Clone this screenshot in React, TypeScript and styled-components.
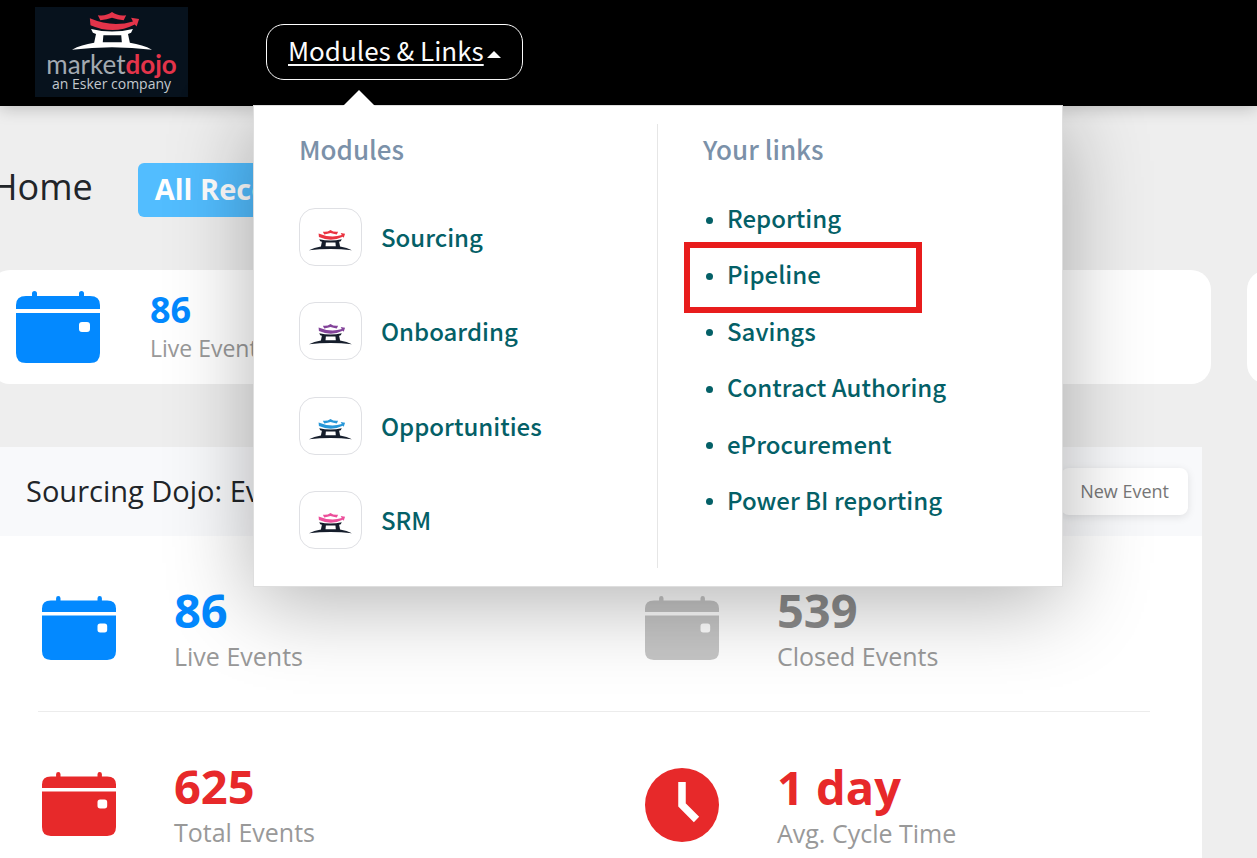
import React from "react";
import styled, { createGlobalStyle } from "styled-components";

const ui = `"Open Sans", "Noto Sans", sans-serif`;
const menu = `"Noto Sans CJK SC", "Noto Sans", sans-serif`;

const Global = createGlobalStyle`
  *, *::before, *::after { box-sizing: border-box; }
  body { margin: 0; background: #eeeeee; font-family: ${ui}; color: #212529; }
  ul { list-style: none; margin: 0; padding: 0; }
  h1, h2, h3, p { margin: 0; font-weight: 400; }
`;

const Page = styled.div`
  display: flex;
  flex-direction: column;
  min-height: 100vh;
  overflow: hidden;
`;

const Header = styled.header`
  position: relative;
  z-index: 2;
  display: flex;
  align-items: center;
  gap: 78px;
  padding: 7px 35px 9px;
  background: #000;
  box-shadow: 0 2px 16px rgba(0, 0, 0, 0.22);
`;

const Logo = styled.a`
  display: flex;
  flex-direction: column;
  align-items: center;
  width: 153px;
  height: 90px;
  padding-top: 5px;
  background: #07121d;
  color: #c3c8cd;
  text-decoration: none;
`;

const Brand = styled.span`
  font: 400 26px/26px Lato, sans-serif;
  color: #a3aab1;
  b { font-weight: 700; color: #e4344a; }
`;

const Tagline = styled.span`
  font: 400 14px/14px ${ui};
`;

const Nav = styled.nav`
  position: relative;
`;

const MenuButton = styled.button`
  display: flex;
  align-items: center;
  gap: 3px;
  height: 56px;
  padding: 0 21px 4px;
  border: 1px solid #fff;
  border-radius: 18px;
  background: #000;
  color: #fff;
  font: 400 26px/38px ${menu};
  span { text-decoration: underline; text-underline-offset: 3px; text-decoration-thickness: 2px; }
  svg { margin-top: 8px; }
`;

const Dropdown = styled.div`
  position: absolute;
  top: 81px;
  left: -13px;
  display: grid;
  grid-template-columns: 403px 1fr;
  width: 810px;
  padding: 18px 0;
  border: 1px solid #dedede;
  background: #fff;
  box-shadow: 0 16px 80px rgba(0, 0, 0, 0.3);
  font-family: ${menu};
  &::before {
    content: "";
    position: absolute;
    top: -16px;
    left: 89px;
    border: 16px solid transparent;
    border-top: 0;
    border-bottom-color: #fff;
  }
`;

const MenuColumn = styled.section`
  display: flex;
  flex-direction: column;
  height: 444px;
  padding: 7px 45px 18px;
  & + & { border-left: 1px solid #e6e6e6; }
`;

const MenuHeading = styled.h2`
  font-size: 26px;
  line-height: 36px;
  font-weight: 500;
  color: #7b91a9;
`;

const ModuleList = styled.ul`
  display: flex;
  flex: 1;
  flex-direction: column;
  justify-content: space-between;
  padding: 41px 0 1px;
`;

const ModuleLink = styled.a`
  display: flex;
  align-items: center;
  gap: 19px;
  color: #046067;
  font-size: 24px;
  font-weight: 500;
  line-height: 36px;
  text-decoration: none;
`;

const ModuleTile = styled.span`
  display: grid;
  place-items: center;
  width: 63px;
  height: 58px;
  padding-top: 7px;
  border: 1px solid #dfe0e4;
  border-radius: 16px;
`;

const LinkList = styled.ul`
  display: flex;
  flex: 1;
  flex-direction: column;
  justify-content: space-between;
  padding: 33px 0 32px;
`;

const LinkItem = styled.li`
  position: relative;
  display: flex;
  align-items: center;
  gap: 14px;
  padding-left: 3px;
  color: #046067;
  font-size: 24px;
  font-weight: 500;
  line-height: 36px;
  &::before {
    content: "";
    width: 7px;
    height: 7px;
    margin-top: 4px;
    border-radius: 50%;
    background: currentColor;
  }
  a { color: inherit; text-decoration: none; }
`;

const Highlight = styled.span`
  position: absolute;
  top: -14px;
  left: -19px;
  width: 238px;
  height: 71px;
  border: 6px solid #e81c1c;
  pointer-events: none;
`;

const Main = styled.main`
  display: flex;
  flex: 1;
  flex-direction: column;
`;

const TitleRow = styled.div`
  display: flex;
  align-items: center;
  gap: 45px;
  margin: 57px 0 53px -9px;
`;

const Title = styled.h1`
  padding-bottom: 6px;
  font-size: 36px;
  line-height: 48px;
`;

const FilterButton = styled.button`
  height: 54px;
  padding: 0 17px 2px;
  border: 0;
  border-radius: 6px;
  background: #52bdff;
  color: #fff;
  font: 700 29px/52px ${ui};
`;

const CardRow = styled.div`
  display: flex;
  gap: 36px;
  margin: 0 -1200px 63px -10px;
`;

const Card = styled.section`
  display: flex;
  flex: none;
  align-items: center;
  gap: 50px;
  width: calc(100vw - 36px);
  height: 114px;
  padding: 0 26px;
  border-radius: 20px;
  background: #fff;
`;

const CardText = styled.div`
  padding-top: 3px;
`;

const CardValue = styled.p`
  color: #0389ff;
  font-size: 36px;
  font-weight: 700;
  line-height: 38px;
`;

const CardLabel = styled.p`
  color: #999;
  font-size: 23px;
  line-height: 38px;
`;

const Panel = styled.section`
  display: flex;
  flex: 1;
  flex-direction: column;
  margin-right: 55px;
  background: #fff;
`;

const PanelHeader = styled.div`
  display: flex;
  align-items: center;
  justify-content: space-between;
  height: 89px;
  padding: 0 14px 0 26px;
  background: #f8f9fb;
`;

const PanelTitle = styled.h2`
  padding-bottom: 2px;
  font-size: 29px;
  line-height: 42px;
`;

const NewEventButton = styled.button`
  height: 47px;
  padding: 0 19px 2px;
  border: 0;
  border-radius: 8px;
  background: #fff;
  box-shadow: 0 2px 8px rgba(0, 0, 0, 0.1);
  color: #777;
  font: 400 18px/24px ${ui};
`;

const StatRow = styled.div`
  display: grid;
  grid-template-columns: 1fr 1fr;
  align-items: start;
  column-gap: 98px;
  margin: 0 52px 0 38px;
  padding: 56px 0 47px 4px;
  border-bottom: 1px solid #ececec;
  &:last-child { padding-bottom: 15px; border-bottom: 0; }
`;

const Stat = styled.div`
  display: flex;
  align-items: center;
  gap: 58px;
`;

const StatText = styled.div`
  display: grid;
  gap: 20px;
  white-space: nowrap;
`;

const StatValue = styled.p<{ $color: string }>`
  color: ${(p) => p.$color};
  font-size: 47px;
  font-weight: 700;
  line-height: 36px;
`;

const StatLabel = styled.p`
  color: #999;
  font-size: 25px;
  line-height: 16px;
`;

const Temple = ({ width, height, roof, base }: { width: number; height: number; roof: string; base: string }) => (
  <svg width={width} height={height} viewBox="0 0 130 62" preserveAspectRatio="none" aria-hidden="true">
    <path fill={roof} d="M42 5 Q55 7 65 0 Q75 7 88 5 L84 13 Q73 12 65 9 Q57 12 46 13Z" />
    <path fill={roof} d="M29 10 Q65 25 99 15 L96 9 L109 11 L105 23 L102 20 Q68 37 30 21Z" />
    <path
      fill={base}
      fillRule="evenodd"
      d="M31 27 Q65 35 99 27 L96 33 L91 35 L94 49 Q115 52 130 60 Q65 52 0 60 Q15 52 36 49 L39 35 L34 33Z M51 37 L50 48 H81 L80 37Z"
    />
  </svg>
);

const Calendar = ({ width, height, color }: { width: number; height: number; color: string }) => (
  <svg width={width} height={height} viewBox="0 0 84 72" preserveAspectRatio="none" aria-hidden="true" fill={color}>
    <path d="M0 18V14Q0 5 10 5H16V2.500Q16 0 18.500 0T21 2.500V5H63V2.500Q63 0 65.500 0T68 2.500V5H74Q84 5 84 14V18Z" />
    <path
      fillRule="evenodd"
      d="M0 22H84V62Q84 72 74 72H10Q0 72 0 62Z M66 31Q63 31 63 34V38Q63 41 66 41H71Q74 41 74 38V34Q74 31 71 31Z"
    />
  </svg>
);

const Clock = () => (
  <svg width="74" height="74" viewBox="0 0 74 74" aria-hidden="true">
    <circle cx="37" cy="37" r="37" fill="#e7292a" />
    <path d="M37 14V37L51.500 51.500" fill="none" stroke="#fff" strokeWidth="7.500" />
  </svg>
);

const modules = [
  { name: "Sourcing", color: "#ea3340" },
  { name: "Onboarding", color: "#83439a" },
  { name: "Opportunities", color: "#2797d8" },
  { name: "SRM", color: "#ec4f9b" },
];

const links = ["Reporting", "Pipeline", "Savings", "Contract Authoring", "eProcurement", "Power BI reporting"];

const stats = [
  [
    { value: "86", label: "Live Events", color: "#0389ff", icon: "#0389ff" },
    { value: "539", label: "Closed Events", color: "#8c8c8c", icon: "#c6c6c6" },
  ],
  [
    { value: "625", label: "Total Events", color: "#e7292a", icon: "#e7292a" },
    { value: "1 day", label: "Avg. Cycle Time", color: "#e7292a", icon: "clock" },
  ],
];

export default function App() {
  return (
    <Page>
      <Global />
      <Header>
        <Logo href="#">
          <Temple width={80} height={39} roof="#e4344a" base="#ffffff" />
          <Brand>market<b>dojo</b></Brand>
          <Tagline>an Esker company</Tagline>
        </Logo>
        <Nav>
          <MenuButton type="button" aria-expanded="true">
            <span>Modules &amp; Links</span>
            <svg width="14" height="7" viewBox="0 0 14 7" aria-hidden="true">
              <path d="M0 7L7 0L14 7Z" fill="#fff" />
            </svg>
          </MenuButton>
          <Dropdown>
            <MenuColumn>
              <MenuHeading>Modules</MenuHeading>
              <ModuleList>
                {modules.map((m) => (
                  <li key={m.name}>
                    <ModuleLink href="#">
                      <ModuleTile>
                        <Temple width={43} height={21} roof={m.color} base="#151d2b" />
                      </ModuleTile>
                      {m.name}
                    </ModuleLink>
                  </li>
                ))}
              </ModuleList>
            </MenuColumn>
            <MenuColumn>
              <MenuHeading>Your links</MenuHeading>
              <LinkList>
                {links.map((name) => (
                  <LinkItem key={name}>
                    <a href="#">{name}</a>
                    {name === "Pipeline" && <Highlight />}
                  </LinkItem>
                ))}
              </LinkList>
            </MenuColumn>
          </Dropdown>
        </Nav>
      </Header>
      <Main>
        <TitleRow>
          <Title>Home</Title>
          <FilterButton type="button">All Records</FilterButton>
        </TitleRow>
        <CardRow>
          <Card>
            <Calendar width={84} height={72} color="#0389ff" />
            <CardText>
              <CardValue>86</CardValue>
              <CardLabel>Live Events</CardLabel>
            </CardText>
          </Card>
          <Card />
        </CardRow>
        <Panel>
          <PanelHeader>
            <PanelTitle>Sourcing Dojo: Events</PanelTitle>
            <NewEventButton type="button">New Event</NewEventButton>
          </PanelHeader>
          {stats.map((row, i) => (
            <StatRow key={i}>
              {row.map((s) => (
                <Stat key={s.label}>
                  {s.icon === "clock" ? <Clock /> : <Calendar width={74} height={64} color={s.icon} />}
                  <StatText>
                    <StatValue $color={s.color}>{s.value}</StatValue>
                    <StatLabel>{s.label}</StatLabel>
                  </StatText>
                </Stat>
              ))}
            </StatRow>
          ))}
        </Panel>
      </Main>
    </Page>
  );
}
